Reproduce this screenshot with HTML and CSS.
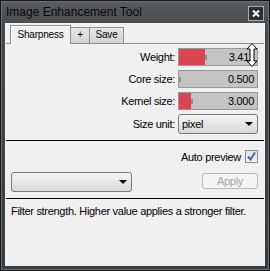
FILE: index.html
```html
<!DOCTYPE html>
<html lang="en">
<head>
    <meta charset="UTF-8">
    <title>Image Enhancement Tool</title>
    <link rel="stylesheet" href="styles.css">
</head>
<body>
<div class="window">
    <div class="titlebar">
        <span class="title">Image Enhancement Tool</span>
        <span class="close">
            <svg width="8" height="7" viewBox="0 0 8 7"><path d="M1 0.5 L7 6.5 M7 0.5 L1 6.5" stroke="#fff" stroke-width="2"/></svg>
        </span>
    </div>
    <div class="client">
        <div class="tabs">
            <div class="tab active">Sharpness</div>
            <div class="tab">+</div>
            <div class="tab">Save</div>
        </div>
        <div class="pane">
            <div class="params">
                <label>Weight:</label>
                <div class="slider"><span class="fill" style="width:26px"></span><span class="tick"></span><span class="value">3.411</span></div>
                <label>Core size:</label>
                <div class="slider"><span class="fill" style="width:0"></span><span class="tick"></span><span class="value">0.500</span></div>
                <label>Kernel size:</label>
                <div class="slider"><span class="fill" style="width:12px"></span><span class="tick"></span><span class="value">3.000</span></div>
                <label>Size unit:</label>
                <div class="select"><span class="text">pixel</span><span class="arrow"></span></div>
            </div>
            <div class="rule"></div>
            <div class="actions">
                <div class="auto">
                    <span>Auto preview</span>
                    <span class="check">
                        <svg width="11" height="11" viewBox="0 0 11 11"><path d="M2 5.5 L4.5 8.5 L9 1.5" stroke="#4a68b5" stroke-width="2" fill="none"/></svg>
                    </span>
                </div>
                <div class="buttons">
                    <div class="select combo"><span class="text"></span><span class="arrow"></span></div>
                    <div class="apply">Apply</div>
                </div>
            </div>
            <div class="rule"></div>
            <p class="hint">Filter strength. Higher value applies a stronger filter.</p>
        </div>
    </div>
    <!-- resize cursor over the weight slider -->
    <svg class="cursor" width="12" height="25" viewBox="0 0 12 25">
        <path d="M6 0.5 L11 6 L8 6 L8 18 L11 18 L6 23.5 L1 18 L4 18 L4 6 L1 6 Z" fill="#fff" stroke="#000" stroke-width="1"/>
    </svg>
</div>
</body>
</html>
```

FILE: styles.css
```css
* {
    margin: 0;
    padding: 0;
    box-sizing: border-box;
}

body {
    font-family: "Liberation Sans", Arial, sans-serif;
    font-size: 11px;
    letter-spacing: -0.3px;
    color: #000;
    background: #fff;
}

.window {
    position: relative;
    display: flex;
    flex-direction: column;
    width: 270px;
    height: 271px;
    padding: 0 4px 4px 4px;
    border: 1px solid #151618;
    background: linear-gradient(#5a5d60, #45484b 30px, #3a3d40);
    box-shadow: inset 1px 1px 0 #6d7073, inset -1px -1px 0 #6d7276;
}

.titlebar {
    display: flex;
    align-items: center;
    justify-content: space-between;
    height: 22px;
    padding: 0 1px;
}

.title {
    font-size: 12px;
    letter-spacing: 0;
    color: #0c0808;
}

.close {
    display: flex;
    align-items: center;
    justify-content: center;
    width: 16px;
    height: 15px;
    margin-top: 3px;
    border: 1px solid #a9abad;
    background: #2e3133;
}

.client {
    flex: 1;
    display: flex;
    flex-direction: column;
    border: 1px solid #f4f4f4;
    background: #f0f0f0;
}

.tabs {
    display: flex;
    align-items: flex-end;
    height: 20px;
    padding: 1px 0 0 4px;
    border-bottom: 1px solid #8c8e92;
}

.tab {
    height: 16px;
    margin-left: -1px;
    border: 1px solid #8c8e92;
    border-bottom: none;
    background: linear-gradient(#e6e6e6, #d4d4d4);
    font-size: 10px;
    line-height: 14px;
    text-align: center;
    letter-spacing: -0.2px;
}

.tab:nth-child(2) {
    width: 20px;
}

.tab:nth-child(3) {
    width: 35px;
}

.tab.active {
    width: 61px;
    height: 19px;
    margin-left: 0;
    margin-bottom: -1px;
    background: #f0f0f0;
    line-height: 17px;
    box-shadow: inset 1px 1px 0 #fff;
}

.pane {
    flex: 1;
    display: flex;
    flex-direction: column;
    padding-top: 4px;
}

.params {
    display: grid;
    grid-template-columns: 1fr 80px;
    column-gap: 3px;
    row-gap: 4px;
    align-items: center;
    padding-right: 6px;
}

.params label {
    text-align: right;
}

.slider {
    display: flex;
    align-items: center;
    height: 18px;
    border: 1px solid #989898;
    background: #c4c4c4;
}

.slider .fill {
    align-self: stretch;
    background: #db4451;
}

.slider .tick {
    width: 2px;
    height: 5px;
    background: #8d8d8d;
}

.slider .value {
    margin-left: auto;
    padding-right: 3px;
}

.select {
    display: flex;
    align-items: center;
    justify-content: space-between;
    height: 20px;
    padding: 0 4px 0 3px;
    border: 1px solid #7a7a7a;
    border-radius: 3px;
    background: linear-gradient(#f6f6f6, #e6e6e6 50%, #d8d8d8);
}

.select .arrow {
    width: 0;
    height: 0;
    border-left: 4px solid transparent;
    border-right: 4px solid transparent;
    border-top: 4px solid #000;
}

.rule {
    height: 1px;
    margin-top: 6px;
    background: #000;
}

.actions {
    display: flex;
    flex-direction: column;
    gap: 9px;
    padding-top: 9px;
}

.auto {
    display: flex;
    align-items: center;
    justify-content: flex-end;
    gap: 4px;
    height: 13px;
    padding-right: 6px;
}

.check {
    display: flex;
    align-items: center;
    justify-content: center;
    width: 13px;
    height: 13px;
    border: 1px solid #8b8b8b;
    background: linear-gradient(#dfe3ea, #f2f3f5);
}

.buttons {
    display: flex;
    align-items: flex-start;
    justify-content: space-between;
    padding: 0 6px 0 5px;
}

.combo {
    width: 121px;
}

.apply {
    width: 56px;
    height: 16px;
    margin-top: 1px;
    border: 1px solid #b3b8bd;
    border-radius: 3px;
    background: #f4f4f4;
    color: #a3a3a3;
    line-height: 14px;
    text-align: center;
}

.hint {
    padding: 6px 5px 0 5px;
    line-height: 13px;
}

.cursor {
    position: absolute;
    left: 245px;
    top: 42px;
}
```
